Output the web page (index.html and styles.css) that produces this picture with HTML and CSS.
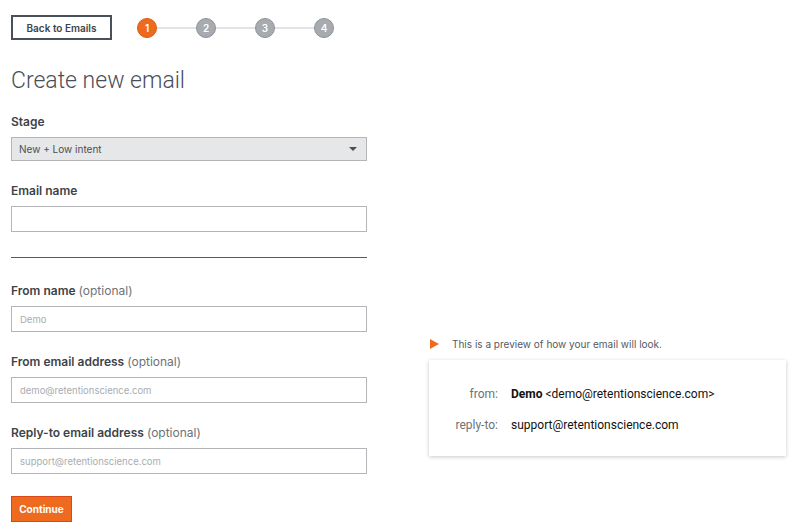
FILE: index.html
```html
<!DOCTYPE html>
<html lang="en">
<head>
	<meta charset="UTF-8">
	<title>Create new email</title>
	<link rel="stylesheet" href="styles.css">
</head>
<body>
	<div class="top-bar">
		<button class="back-button">Back to Emails</button>
		<div class="steps">
			<span class="step active">1</span>
			<span class="step-line"></span>
			<span class="step">2</span>
			<span class="step-line"></span>
			<span class="step">3</span>
			<span class="step-line"></span>
			<span class="step">4</span>
		</div>
	</div>
	<div class="page">
		<div class="form-column">
			<h1 class="page-title">Create new email</h1>
			<div class="field">
				<label class="field-label">Stage</label>
				<div class="select-box">
					<span>New + Low intent</span>
					<span class="caret"></span>
				</div>
			</div>
			<div class="field">
				<label class="field-label">Email name</label>
				<input class="text-input" type="text">
			</div>
			<hr class="divider">
			<div class="field">
				<label class="field-label">From name <span class="optional">(optional)</span></label>
				<input class="text-input" type="text" placeholder="Demo">
			</div>
			<div class="field">
				<label class="field-label">From email address <span class="optional">(optional)</span></label>
				<input class="text-input" type="text" placeholder="demo@retentionscience.com">
			</div>
			<div class="field">
				<label class="field-label">Reply-to email address <span class="optional">(optional)</span></label>
				<input class="text-input" type="text" placeholder="support@retentionscience.com">
			</div>
			<button class="continue-button">Continue</button>
		</div>
		<div class="preview-column">
			<div class="preview-note">
				<span class="arrow"></span>
				This is a preview of how your email will look.
			</div>
			<div class="preview-card">
				<div class="preview-row">
					<span class="preview-key">from:</span>
					<span class="preview-value"><b>Demo</b> &lt;demo@retentionscience.com&gt;</span>
				</div>
				<div class="preview-row">
					<span class="preview-key">reply-to:</span>
					<span class="preview-value">support@retentionscience.com</span>
				</div>
			</div>
		</div>
	</div>
</body>
</html>
```

FILE: styles.css
```css
body {
	margin: 0;
	font-family: Inter, "Liberation Sans", sans-serif;
	color: #4a4f57;
	background-color: #ffffff;
}
.top-bar {
	display: flex;
	align-items: center;
	padding: 15px 11px 0;
}
.back-button {
	width: 101px;
	height: 25px;
	border: 2px solid #4a5059;
	background-color: #ffffff;
	color: #3d434b;
	font-family: inherit;
	font-size: 10px;
	font-weight: 600;
	padding: 0;
}
.steps {
	display: flex;
	align-items: center;
	margin-left: 25px;
}
.step {
	width: 18px;
	height: 18px;
	border-radius: 50%;
	border: 1px solid #8e9298;
	background-color: #a7aaae;
	color: #ffffff;
	font-size: 10px;
	font-weight: 600;
	display: flex;
	align-items: center;
	justify-content: center;
}
.step.active {
	background-color: #ee6a1f;
	border-color: #d85a15;
}
.step-line {
	width: 39px;
	height: 2px;
	background-color: #e2e3e4;
}
.page {
	display: flex;
	padding-left: 11px;
}
.form-column {
	width: 356px;
}
.page-title {
	font-family: Roboto, "Liberation Sans", sans-serif;
	font-size: 23px;
	font-weight: 300;
	margin: 27px 0 20px;
	color: #4a4f57;
}
.field {
	margin-bottom: 22px;
}
.field-label {
	display: block;
	font-size: 12px;
	font-weight: 600;
	color: #3d434b;
	margin-bottom: 8px;
}
.optional {
	font-weight: 400;
	color: #6d7278;
}
.select-box {
	height: 22px;
	border: 1px solid #b3b5b8;
	background-color: #e6e7e8;
	display: flex;
	align-items: center;
	justify-content: space-between;
	padding: 0 9px 0 7px;
	font-size: 10px;
	color: #4a4f57;
}
.caret {
	width: 0;
	height: 0;
	border-left: 4px solid transparent;
	border-right: 4px solid transparent;
	border-top: 4px solid #4a4f57;
}
.text-input {
	display: block;
	box-sizing: border-box;
	width: 356px;
	height: 26px;
	border: 1px solid #b3b5b8;
	padding: 0 8px;
	font-family: inherit;
	font-size: 9.5px;
	color: #4a4f57;
}
.text-input::placeholder {
	color: #a9acb0;
}
.divider {
	border: none;
	border-top: 1px solid #555a61;
	margin: 25px 0 25px;
}
.continue-button {
	width: 61px;
	height: 26px;
	background-color: #ee6a1f;
	border: 1px solid #d9481a;
	color: #ffffff;
	font-family: inherit;
	font-size: 10px;
	font-weight: 700;
	padding: 0;
}
.preview-column {
	margin-left: 62px;
	padding-top: 298px;
	width: 357px;
}
.preview-note {
	display: flex;
	align-items: center;
	font-size: 10px;
	color: #555a61;
	margin-bottom: 10px;
}
.arrow {
	width: 0;
	height: 0;
	border-top: 5px solid transparent;
	border-bottom: 5px solid transparent;
	border-left: 9px solid #ee6a1f;
	margin: 0 13px 0 1px;
}
.preview-card {
	background-color: #ffffff;
	box-shadow: 0 1px 4px rgba(0, 0, 0, 0.22);
	padding: 27px 0 24px;
}
.preview-row {
	display: flex;
	font-family: Roboto, "Liberation Sans", sans-serif;
	font-size: 12px;
	margin-bottom: 17px;
}
.preview-row:last-child {
	margin-bottom: 0;
}
.preview-key {
	width: 69px;
	text-align: right;
	color: #6d7278;
}
.preview-value {
	margin-left: 13px;
	color: #111111;
}
```
